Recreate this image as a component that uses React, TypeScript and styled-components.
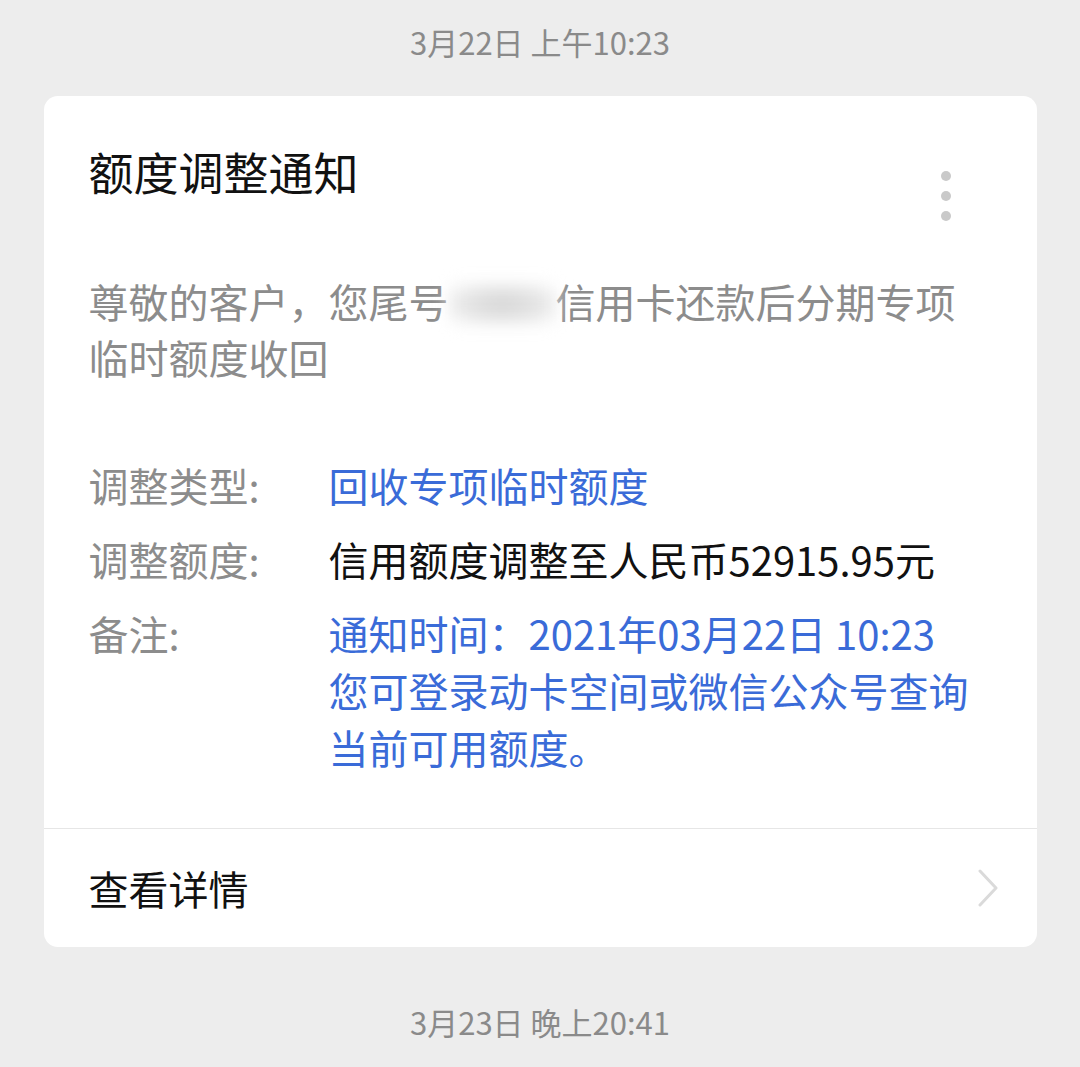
import React from 'react';
import styled, { createGlobalStyle } from 'styled-components';

const GlobalStyle = createGlobalStyle`
	html, body {
		margin: 0;
		padding: 0;
		background-color: #ededed;
	}

	body {
		font-family: 'Noto Sans CJK SC', 'Noto Sans', sans-serif;
		-webkit-font-smoothing: antialiased;
	}
`;

const Page = styled.div`
	width: 1080px;
	min-height: 1067px;
	background-color: #ededed;
	display: flex;
	flex-direction: column;
	align-items: center;
`;

const TimeStamp = styled.div<{ $top: number; $bottom: number }>`
	font-size: 31px;
	line-height: 40px;
	color: #8a8a8a;
	padding-top: ${(p) => p.$top}px;
	padding-bottom: ${(p) => p.$bottom}px;
`;

const Card = styled.div`
	width: 993px;
	background-color: #ffffff;
	border-radius: 14px;
	overflow: hidden;
`;

const Content = styled.div`
	padding: 46px 0 52px 45px;
`;

const Header = styled.div`
	display: flex;
	justify-content: space-between;
	align-items: flex-start;
	padding-right: 86px;

	h3 {
		margin: 0;
		font-size: 45px;
		font-weight: 400;
		line-height: 60px;
		color: #111111;
	}
`;

const MoreDots = styled.div`
	display: flex;
	flex-direction: column;
	gap: 10px;
	margin-top: 29px;

	span {
		width: 10px;
		height: 10px;
		border-radius: 50%;
		background-color: #c9c9c9;
	}
`;

const Intro = styled.p`
	margin: 52px 0 0;
	font-size: 40px;
	line-height: 56px;
	color: #8c8c8c;
	width: 880px;
`;

const Masked = styled.span`
	display: inline-block;
	vertical-align: middle;
	width: 107px;
	height: 40px;
	margin-top: -6px;
	background: radial-gradient(ellipse at center, #d4d4d4 0%, #e6e6e6 55%, #ffffff 100%);
	filter: blur(8px);
`;

const Fields = styled.div`
	margin-top: 72px;
	display: flex;
	flex-direction: column;
	gap: 17px;
`;

const Field = styled.div`
	display: grid;
	grid-template-columns: 240px 1fr;
	font-size: 40px;
	line-height: 57px;

	.label {
		color: #8c8c8c;
	}
`;

const Value = styled.div<{ $blue?: boolean }>`
	color: ${(p) => (p.$blue ? '#3a6bd8' : '#111111')};
	padding-right: 40px;
`;

const Footer = styled.div`
	border-top: 1.5px solid #e6e6e6;
	height: 118px;
	display: flex;
	align-items: center;
	justify-content: space-between;
	padding: 0 38px 0 45px;
	font-size: 40px;
	color: #111111;
`;

const Chevron = () => (
	<svg width="22" height="38" viewBox="0 0 22 38" fill="none">
		<path d="M3 2 L19 19 L3 36" stroke="#dadada" strokeWidth="3" strokeLinecap="round" strokeLinejoin="round" />
	</svg>
);

const App = () => {
	return (
		<Page>
			<GlobalStyle />
			<TimeStamp $top={22} $bottom={34}>3月22日 上午10:23</TimeStamp>
			<Card>
				<Content>
					<Header>
						<h3>额度调整通知</h3>
						<MoreDots>
							<span />
							<span />
							<span />
						</MoreDots>
					</Header>
					<Intro>
						尊敬的客户，您尾号<Masked />信用卡还款后分期专项
						<br />
						临时额度收回
					</Intro>
					<Fields>
						<Field>
							<div className="label">调整类型:</div>
							<Value $blue>回收专项临时额度</Value>
						</Field>
						<Field>
							<div className="label">调整额度:</div>
							<Value>信用额度调整至人民币52915.95元</Value>
						</Field>
						<Field>
							<div className="label">备注:</div>
							<Value $blue>
								通知时间：2021年03月22日 10:23
								<br />
								您可登录动卡空间或微信公众号查询
								<br />
								当前可用额度。
							</Value>
						</Field>
					</Fields>
				</Content>
				<Footer>
					<span>查看详情</span>
					<Chevron />
				</Footer>
			</Card>
			<TimeStamp $top={55} $bottom={20}>3月23日 晚上20:41</TimeStamp>
		</Page>
	);
};

export default App;
